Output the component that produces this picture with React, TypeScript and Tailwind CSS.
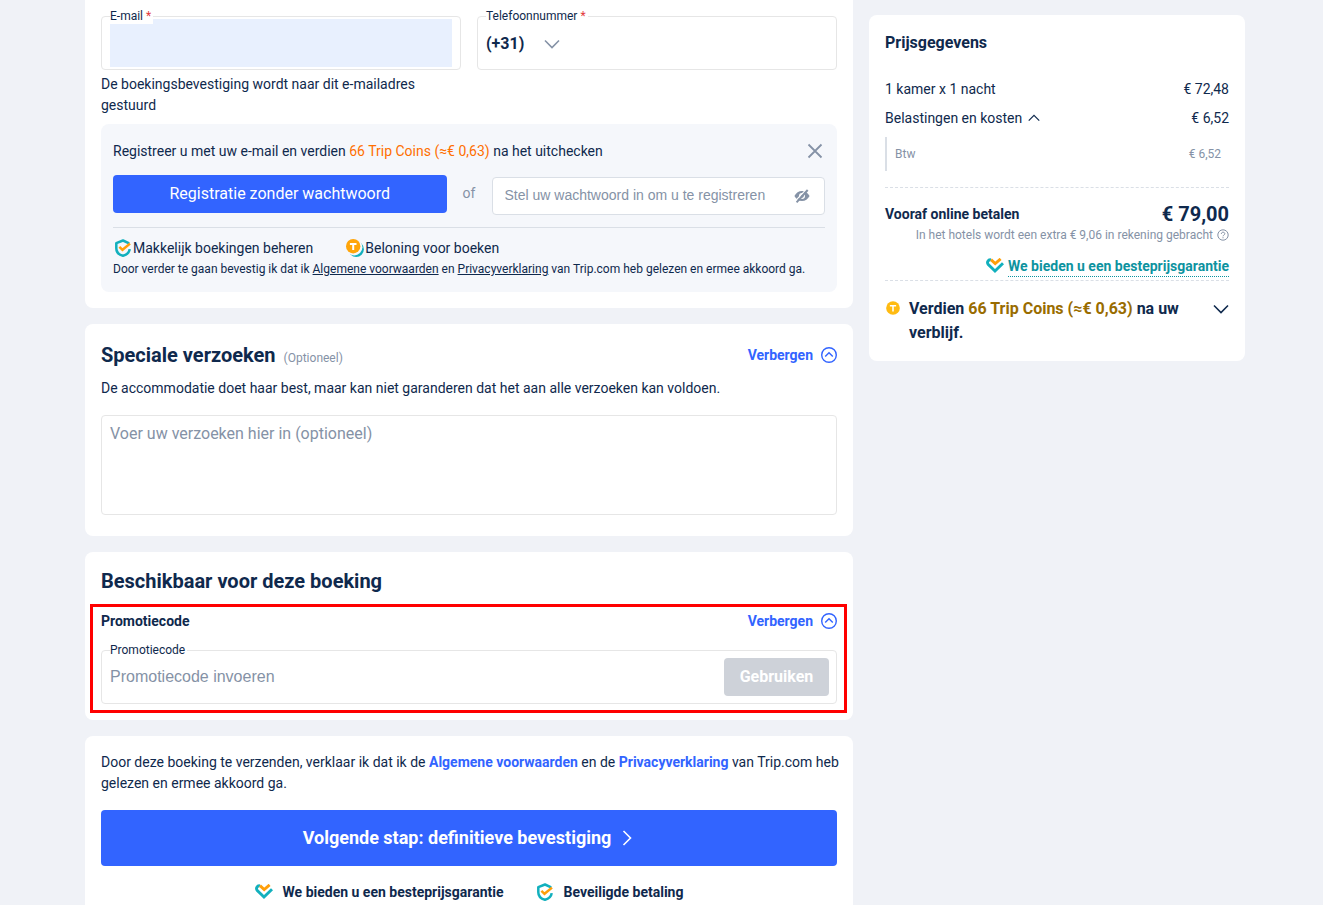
import { useState } from 'react';
import type { ReactNode } from 'react';

type IconProps = { className?: string };

const ChevronIcon = ({ className }: IconProps) => (
  <svg viewBox="0 0 16 16" fill="none" stroke="currentColor" strokeWidth="1.6" className={className} aria-hidden="true">
    <path d="M1 4.5 8 11.5 15 4.5" />
  </svg>
);

const CloseIcon = ({ className }: IconProps) => (
  <svg viewBox="0 0 16 16" fill="none" stroke="currentColor" strokeWidth="1.8" className={className} aria-hidden="true">
    <path d="M1.5 1.5l13 13M14.5 1.5l-13 13" />
  </svg>
);

const CircleUpIcon = ({ className }: IconProps) => (
  <svg viewBox="0 0 16 16" fill="none" stroke="currentColor" strokeWidth="1.4" className={className} aria-hidden="true">
    <circle cx="8" cy="8" r="7.3" />
    <path d="M4.2 9.6 8 5.8l3.8 3.8" />
  </svg>
);

const EyeOffIcon = ({ className }: IconProps) => (
  <svg viewBox="0 0 16 14" className={className} aria-hidden="true">
    <path
      fill="currentColor"
      fillRule="evenodd"
      d="M.4 7C2 3.9 4.8 2 8 2s6 1.9 7.6 5c-1.600 3.100-4.400 5-7.600 5S2 10.100.4 7zM8 4a3 3 0 1 0 0 6 3 3 0 0 0 0-6zM8 5.300a1.700 1.700 0 1 1 0 3.400 1.700 1.700 0 0 1 0-3.400z"
    />
    <path d="M1.400 11.900 12.300.4" stroke="#fff" strokeWidth="1.200" />
    <path d="M2.600 13.300 13.700 1" stroke="currentColor" strokeWidth="2" />
  </svg>
);

const ShieldIcon = ({ className }: IconProps) => (
  <svg viewBox="0 0 18 18" fill="none" className={className} aria-hidden="true">
    <path
      d="M15.200 4.300 9 1.500 2.300 4.100v5.100c0 3.900 2.800 6.600 6.700 7.600 3.400-.9 6.200-3 6.700-6.600"
      stroke="#12b0bd"
      strokeWidth="2.500"
      strokeLinejoin="round"
    />
    <path d="M5.400 7.800 8.500 10.800 16 4.600" stroke="#ff9f0a" strokeWidth="2.500" />
  </svg>
);

const HeartIcon = ({ className }: IconProps) => (
  <svg viewBox="0 0 18 16" fill="none" className={className} aria-hidden="true">
    <path d="M4.900 1.900C2.200 1.400.5 4.300 2.300 6.500L9 13l8-7.700" stroke="#12b0bd" strokeWidth="2.900" />
    <path d="M5 1.700 9.200 5.500 14.600.9" stroke="#ff9f0a" strokeWidth="2.900" />
  </svg>
);

const CoinIcon = ({ className, stacked = false }: IconProps & { stacked?: boolean }) => (
  <svg viewBox="0 0 18 18" className={className} aria-hidden="true">
    {stacked && <circle cx="10.200" cy="10.200" r="7.700" fill="#12b0bd" />}
    {stacked && <circle cx="8.200" cy="8.200" r="8.200" fill="#f5f7fb" />}
    <circle cx={stacked ? 7.2 : 9} cy={stacked ? 7.2 : 9} r={stacked ? 7.2 : 8.8} fill={stacked ? '#ffa50a' : '#ffbb12'} />
    <path
      d={stacked ? 'M3.900 4.900h6.600M7.200 4.900v6' : 'M5 6.200h8M9 6.200v7.200'}
      stroke="#fff"
      strokeWidth="2"
      fill="none"
    />
  </svg>
);

const HelpIcon = ({ className }: IconProps) => (
  <svg viewBox="0 0 12 12" fill="none" stroke="currentColor" className={className} aria-hidden="true">
    <circle cx="6" cy="6" r="5.200" />
    <path d="M4.300 4.900c0-2.400 3.500-2.200 3.500-.1C7.800 6.100 6 6 6 7.300M6 8.200v1.100" />
  </svg>
);

const FieldLabel = ({ htmlFor, required, children }: { htmlFor: string; required?: boolean; children: ReactNode }) => (
  <label htmlFor={htmlFor} className="absolute -top-[9px] left-2 bg-white pr-0.5 text-xs leading-4">
    {children}
    {required && <span className="text-[#e3383c]"> *</span>}
  </label>
);

const HideButton = () => (
  <button type="button" className="flex items-center gap-2 text-sm leading-5 font-bold text-[#3264ff]">
    Verbergen
    <CircleUpIcon className="size-4" />
  </button>
);

const ContactCard = () => {
  const [email, setEmail] = useState('');
  const [password, setPassword] = useState('');

  return (
    <section className="rounded-b-lg bg-white px-4 pt-4 pb-4">
      <div className="grid grid-cols-2 gap-4">
        <div>
          <div className="relative h-[54px] rounded border border-[#e6e6e6] px-2 py-0.5">
            <FieldLabel htmlFor="email" required>E-mail</FieldLabel>
            <input
              id="email"
              type="email"
              value={email}
              onChange={(e) => setEmail(e.target.value)}
              className="block h-12 w-full bg-[#e8f0fe] px-2 outline-none"
            />
          </div>
          <p className="mt-1 text-sm leading-[21px]">De boekingsbevestiging wordt naar dit e-mailadres gestuurd</p>
        </div>
        <div className="relative flex h-[54px] rounded border border-[#e6e6e6] px-2">
          <FieldLabel htmlFor="phone" required>Telefoonnummer</FieldLabel>
          <button type="button" className="flex items-center gap-5 pt-0.5 text-base font-bold">
            (+31)
            <ChevronIcon className="size-4 text-[#8592a6]" />
          </button>
          <input id="phone" type="tel" className="min-w-0 flex-1 px-3 outline-none" />
        </div>
      </div>

      {/* Sign-up prompt */}
      <div className="mt-2 rounded-lg bg-[#f5f7fb] px-3 pt-[17px] pb-3">
        <div className="flex items-center justify-between">
          <p className="text-sm leading-5">
            Registreer u met uw e-mail en verdien <span className="text-[#ff6f00]">66 Trip Coins (≈€ 0,63)</span> na het uitchecken
          </p>
          <button type="button" aria-label="Sluiten" className="px-0.5 text-[#8592a6]">
            <CloseIcon className="size-4" />
          </button>
        </div>
        <div className="mt-3.5 grid grid-cols-[1fr_45px_1fr] items-start">
          <button type="button" className="h-[38px] rounded bg-[#3264ff] text-base text-white">
            Registratie zonder wachtwoord
          </button>
          <span className="pt-2 text-center text-sm leading-5 text-[#8592a6]">of</span>
          <div className="mt-0.5 flex h-[38px] items-center rounded border border-[#dadfe6] bg-white px-3">
            <input
              type="password"
              aria-label="Wachtwoord"
              value={password}
              onChange={(e) => setPassword(e.target.value)}
              placeholder="Stel uw wachtwoord in om u te registreren"
              className="min-w-0 flex-1 pb-0.5 font-['Liberation_Sans',sans-serif] text-sm outline-none placeholder:text-[#8592a6]"
            />
            <button type="button" aria-label="Wachtwoord tonen" className="px-0.5 text-[#8592a6]">
              <EyeOffIcon className="h-3.5 w-4" />
            </button>
          </div>
        </div>
        <div className="mt-3 border-t border-[#dadfe6] pt-2.5 text-sm leading-5">
          <div className="flex gap-8">
            <span className="flex items-center">
              <ShieldIcon className="mx-px size-[18px]" />
              Makkelijk boekingen beheren
            </span>
            <span className="flex items-center">
              <CoinIcon stacked className="mx-px size-[18px]" />
              Beloning voor boeken
            </span>
          </div>
          <p className="text-xs leading-[22px]">
            Door verder te gaan bevestig ik dat ik <a href="#voorwaarden" className="underline">Algemene voorwaarden</a> en{' '}
            <a href="#privacy" className="underline">Privacyverklaring</a> van Trip.com heb gelezen en ermee akkoord ga.
          </p>
        </div>
      </div>
    </section>
  );
};

const RequestsCard = () => (
  <section className="rounded-lg bg-white px-4 pt-4 pb-[21px]">
    <div className="flex items-center justify-between">
      <h2 className="text-xl leading-[30px] font-bold">
        Speciale verzoeken
        <span className="ml-2 text-xs font-normal text-[#8592a6]">(Optioneel)</span>
      </h2>
      <HideButton />
    </div>
    <p className="mt-2 text-sm leading-5">
      De accommodatie doet haar best, maar kan niet garanderen dat het aan alle verzoeken kan voldoen.
    </p>
    <textarea
      aria-label="Speciale verzoeken"
      placeholder="Voer uw verzoeken hier in (optioneel)"
      className="mt-[17px] block h-[100px] w-full resize-none rounded border border-[#e6e6e6] px-2 py-1.5 text-base leading-6 outline-none placeholder:text-[#8592a6]"
    />
  </section>
);

const PromoCard = () => {
  const [code, setCode] = useState('');

  return (
    <section className="rounded-lg bg-white pt-3.5 pb-[7px]">
      <h2 className="px-4 text-xl leading-[30px] font-bold">Beschikbaar voor deze boeking</h2>
      <div className="mt-2 mr-1.5 ml-[5px] border-3 border-[#ff0000] pt-1 pr-[7px] pb-1.5 pl-2">
        <div className="flex items-center justify-between">
          <h3 className="text-sm leading-5 font-bold">Promotiecode</h3>
          <HideButton />
        </div>
        <div className="relative mt-[19px] flex h-[54px] items-center rounded border border-[#e6e6e6] pr-[7px] pl-2">
          <FieldLabel htmlFor="promo">Promotiecode</FieldLabel>
          <input
            id="promo"
            value={code}
            onChange={(e) => setCode(e.target.value)}
            placeholder="Promotiecode invoeren"
            className="min-w-0 flex-1 font-['Liberation_Sans',sans-serif] text-base outline-none placeholder:text-[#8592a6]"
          />
          <button type="button" disabled className="h-[38px] w-[105px] rounded bg-[#ced2d9] text-base font-bold text-white">
            Gebruiken
          </button>
        </div>
      </div>
    </section>
  );
};

const ConfirmCard = () => (
  <section className="flex-1 rounded-t-lg bg-white px-4 pt-4">
    <p className="-mr-2 text-sm leading-[21px]">
      Door deze boeking te verzenden, verklaar ik dat ik de{' '}
      <a href="#voorwaarden" className="font-bold text-[#3264ff]">Algemene voorwaarden</a> en de{' '}
      <a href="#privacy" className="font-bold text-[#3264ff]">Privacyverklaring</a> van Trip.com heb gelezen en ermee akkoord ga.
    </p>
    <button
      type="button"
      className="mt-4 flex h-14 w-full items-center justify-center gap-2 rounded bg-[#3264ff] text-lg font-bold text-white"
    >
      Volgende stap: definitieve bevestiging
      <ChevronIcon className="size-4 -rotate-90" />
    </button>
    <ul className="mt-4 flex justify-center gap-8 text-sm leading-5 font-bold">
      <li className="flex items-center gap-2.5">
        <HeartIcon className="h-4 w-[18px]" />
        We bieden u een besteprijsgarantie
      </li>
      <li className="flex items-center gap-2.5">
        <ShieldIcon className="size-[18px]" />
        Beveiligde betaling
      </li>
    </ul>
  </section>
);

const PriceCard = () => (
  <aside className="mt-[15px] w-[376px] shrink-0 self-start rounded-lg bg-white px-4 py-4">
    <h2 className="text-base leading-6 font-bold">Prijsgegevens</h2>
    <div className="mt-6 flex justify-between text-sm leading-5">
      <span>1 kamer x 1 nacht</span>
      <span>€ 72,48</span>
    </div>
    <div className="mt-[9px] flex justify-between text-sm leading-5">
      <button type="button" className="flex items-center gap-1.5">
        Belastingen en kosten
        <ChevronIcon className="size-3 rotate-180" />
      </button>
      <span>€ 6,52</span>
    </div>
    <div className="mt-[9px] flex justify-between border-l-2 border-[#dadfe6] py-2 pr-2 pl-2 text-xs leading-[18px] text-[#8592a6]">
      <span>Btw</span>
      <span>€ 6,52</span>
    </div>
    <div className="mt-4 border-t border-dashed border-[#dadfe6] pt-3.5">
      <div className="flex items-center justify-between font-bold">
        <span className="text-sm leading-6">Vooraf online betalen</span>
        <span className="text-xl leading-6">€ 79,00</span>
      </div>
      <p className="flex items-center justify-end gap-1 text-xs leading-[18px] text-[#8592a6]">
        In het hotels wordt een extra € 9,06 in rekening gebracht
        <HelpIcon className="size-3" />
      </p>
      <p className="mt-3 flex items-center justify-end gap-1 text-sm leading-5 font-bold text-[#0d939f]">
        <HeartIcon className="h-4 w-[18px]" />
        <a href="#garantie" className="-mb-px border-b border-dotted border-[#0d939f]">We bieden u een besteprijsgarantie</a>
      </p>
    </div>
    <div className="mt-1 flex items-start border-t border-dashed border-[#dadfe6] pt-4">
      <CoinIcon className="mt-1 mr-[3px] ml-px size-3.5 shrink-0" />
      <p className="flex-1 pr-4 pl-1.5 text-base leading-6 font-bold">
        Verdien <span className="text-[#996c00]">66 Trip Coins (≈€ 0,63)</span> na uw verblijf.
      </p>
      <button type="button" aria-label="Meer tonen" className="mt-1">
        <ChevronIcon className="size-4" />
      </button>
    </div>
  </aside>
);

const App = () => (
  <div className="flex min-h-screen gap-4 bg-[#f0f2f7] pr-[78px] pl-[85px] font-[Roboto,'Liberation_Sans',sans-serif] text-[#0f294d]">
    <main className="flex min-w-0 flex-1 flex-col gap-4">
      <ContactCard />
      <RequestsCard />
      <PromoCard />
      <ConfirmCard />
    </main>
    <PriceCard />
  </div>
);

export default App;
